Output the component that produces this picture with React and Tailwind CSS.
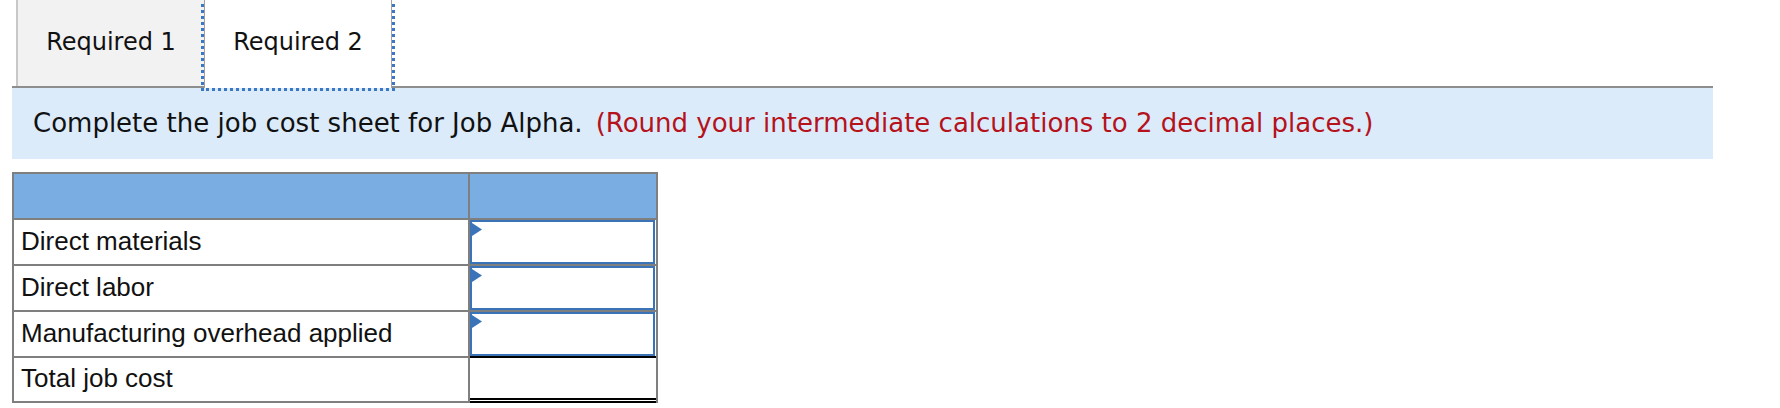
import React from "react";

function Flag() {
  return (
    <svg
      className="absolute left-0 top-[1px]"
      width="10"
      height="13"
      viewBox="0 0 10 13"
    >
      <polygon points="0,0 10,6.5 0,13" fill="#3b73b9" />
    </svg>
  );
}

function Row({ label, kind }) {
  return (
    <div className="flex h-[46px]">
      <div className="w-[456px] border-r-2 border-b-2 border-[#7f7f7f] flex items-center pl-[7px] pb-[2px] text-[26px] text-[#111] [font-family:'Liberation_Sans',Arial,sans-serif]">
        {label}
      </div>
      {kind === "input" && (
        <div className="flex-1 border-b-2 border-[#7f7f7f] pr-[1px]">
          <div className="relative h-full w-full border-2 border-[#3b73b9] bg-white">
            <Flag />
          </div>
        </div>
      )}
      {kind === "lastinput" && (
        <div className="flex-1 border-b-2 border-black pr-[1px]">
          <div className="relative h-full w-full border-2 border-[#3b73b9] bg-white">
            <Flag />
          </div>
        </div>
      )}
    </div>
  );
}

export default function App() {
  return (
    <div className="bg-white w-[1780px] h-[408px] overflow-hidden pl-[12px] [font-family:'DejaVu_Sans',Verdana,sans-serif]">
      <div className="w-[1701px]">
        {/* Tabs */}
        <div className="flex items-end h-[88px] border-b-2 border-[#8e8e8e] pl-[4px]">
          <div className="w-[188px] h-[86px] bg-[#f2f2f2] border-l-2 border-[#c8c8c8] flex items-center justify-center pb-[2px] text-[24px] text-[#111]">
            Required 1
          </div>
          <div className="relative w-[188px] h-[88px] -mb-[2px] bg-white border-x border-[#a0a0a0] outline-[3px] outline-dotted outline-[#3a78c6] flex items-center justify-center pb-[4px] text-[24px] text-[#111]">
            Required 2
          </div>
        </div>

        {/* Instruction panel */}
        <div className="h-[71px] bg-[#dbebfa] flex items-center pl-[21px] text-[26px] text-[#111] whitespace-nowrap">
          <span>Complete the job cost sheet for Job Alpha.</span>
          <span className="ml-[13px] text-[#b5121b]">
            (Round your intermediate calculations to 2 decimal places.)
          </span>
        </div>
      </div>

      {/* Table */}
      <div className="mt-[13px] w-[646px] border-t-2 border-x-2 border-[#7f7f7f]">
        <div className="flex h-[46px]">
          <div className="w-[456px] bg-[#7aade1] border-r-2 border-b-2 border-[#7f7f7f]" />
          <div className="flex-1 bg-[#7aade1] border-b-2 border-[#7f7f7f]" />
        </div>
        <Row label="Direct materials" kind="input" />
        <Row label="Direct labor" kind="input" />
        <Row label="Manufacturing overhead applied" kind="lastinput" />
        <div className="flex h-[45px]">
          <div className="w-[456px] border-r-2 border-b-2 border-[#7f7f7f] flex items-center pl-[7px] pb-[2px] text-[26px] text-[#111] [font-family:'Liberation_Sans',Arial,sans-serif]">
            Total job cost
          </div>
          <div className="flex-1 border-b-[5px] border-double border-black" />
        </div>
      </div>
    </div>
  );
}
